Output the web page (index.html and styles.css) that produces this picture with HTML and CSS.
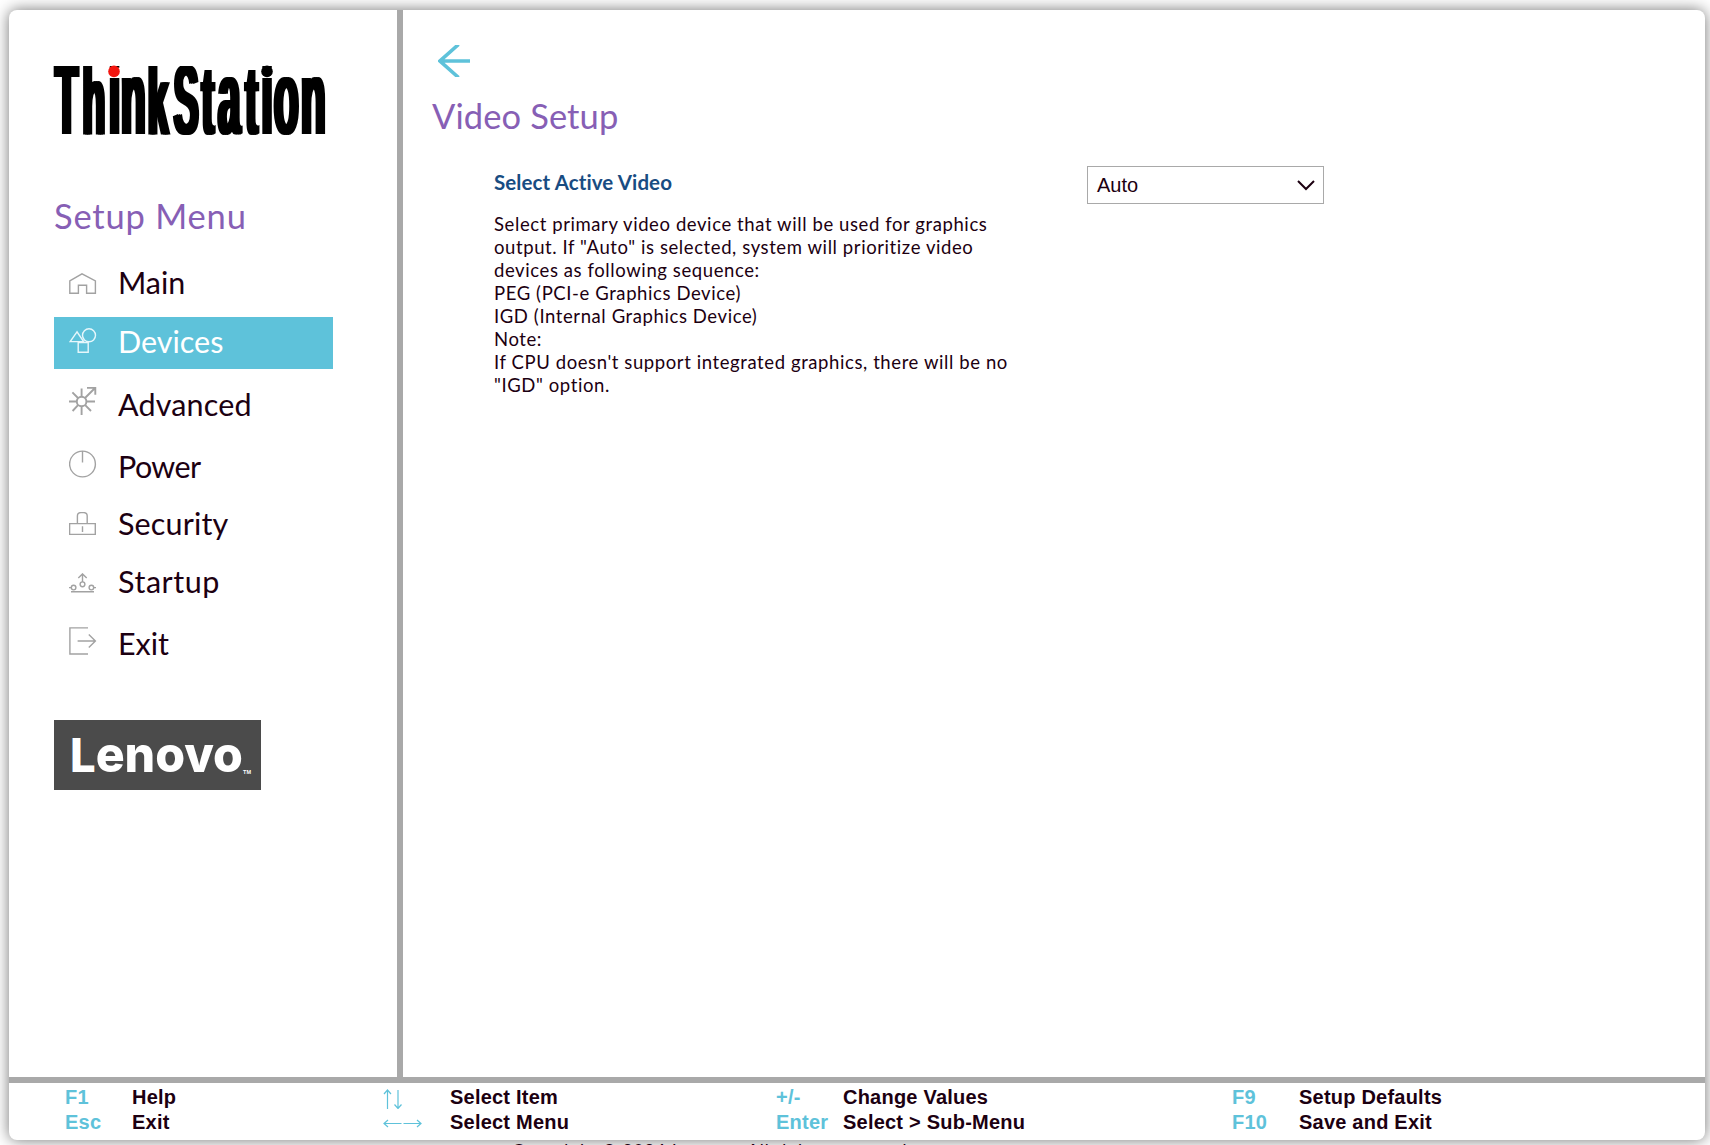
FILE: index.html
```html
<!DOCTYPE html>
<html lang="en">
<head>
<meta charset="utf-8">
<title>ThinkStation Setup</title>
<link rel="stylesheet" href="styles.css">
</head>
<body>
<div class="panel">
  <div class="workspace">
    <aside class="sidebar">
      <svg class="wordmark" width="272" height="69" viewBox="0 0 272 69">
        <filter id="widen" filterUnits="userSpaceOnUse" x="-5" y="-30" width="290" height="130">
          <feOffset in="SourceGraphic" dx="-2" dy="0" result="left"/>
          <feOffset in="SourceGraphic" dx="2" dy="0" result="right"/>
          <feMerge><feMergeNode in="left"/><feMergeNode in="SourceGraphic"/><feMergeNode in="right"/></feMerge>
        </filter>
        <g filter="url(#widen)"><g transform="scale(.38 1)">
          <text class="wordmark-text" y="68" x="3.6 75 144.7 176 247 315 389 431.5 504 545.8 579 650"><tspan>Th</tspan><tspan class="tall">in</tspan><tspan>kSt</tspan><tspan class="tall">a</tspan><tspan>t</tspan><tspan class="tall">ion</tspan></text>
        </g></g>
        <rect x="-4" y="-20" width="280" height="20" fill="#fff"/>
        <circle class="dot-red" cx="60" cy="5.4" r="5.8"/>
        <circle cx="213" cy="5.4" r="5.8"/>
      </svg>
      <h2 class="title menu-title">Setup Menu</h2>
      <nav class="menu">
        <a class="item gap-7"><svg width="28" height="21" viewBox="0 0 28 21"><path d="M.8 7.8 13 .8l13.4 7V20.2H17.6V12.3H9.4V20.2H.8Z"/></svg><span class="w-main">Main</span></a>
        <a class="item active gap-11"><svg width="28" height="25" viewBox="0 0 28 25"><path d="M8 3.8 1.2 13.6H14.6ZM9.2 14.6h10v9.6h-10Z"/><circle cx="20" cy="7.3" r="6.5"/></svg><span class="w-devices">Devices</span></a>
        <a class="item gap-10"><svg class="bold" width="28" height="30" viewBox="0 0 28 30"><circle cx="12.6" cy="15.5" r="4.8"/><path d="M12.6 2.5V10.500M12.6 20.500V29M0 15.500H7.6M17.6 15.500H26M3.4 6.4 9 12M3.6 25 9 19.200M16.2 19.200 22 25M16 12 26 2M18 1.9H26.3V8.8"/></svg><span class="w-advanced">Advanced</span></a>
        <a class="item gap-5"><svg width="28" height="28" viewBox="0 0 28 28"><circle cx="13.5" cy="14" r="12.9"/><path d="M13.5 1V12.5"/></svg><span class="w-power">Power</span></a>
        <a class="item gap-6"><svg width="28" height="23" viewBox="0 0 28 23"><path d="M.6 11.6H26.3V22.4H.6ZM8.4 11.4V4Q8.4.6 12 .6H14.6Q18.2.6 18.2 4V11.4M13.5 14.3V20"/></svg><span class="w-security">Security</span></a>
        <a class="item gap-10"><svg width="28" height="20" viewBox="0 0 28 20"><path d="M2 18.8H25M0 14.6H2.2M24.8 14.6H27M13.5 9V1M9.3 4.9 13.5.9 17.7 4.9"/><circle cx="4.6" cy="14.6" r="2.3"/><circle cx="13.5" cy="11.3" r="2.4"/><circle cx="22.4" cy="14.6" r="2.3"/></svg><span class="w-startup">Startup</span></a>
        <a class="item"><svg width="28" height="28" viewBox="0 0 28 28"><path d="M19 .9H.9V27H19M8.6 14H26M19.8 7.6 26.4 14 19.8 20.4"/></svg><span class="w-exit">Exit</span></a>
      </nav>
      <svg class="brand" width="207" height="70" viewBox="0 0 207 70">
        <rect width="207" height="70" fill="#4b4b4b"/>
        <text class="brand-text" x="16" y="51.5" textLength="173" lengthAdjust="spacingAndGlyphs">L<tspan class="brand-low">enovo</tspan></text>
        <text class="brand-tm" x="189" y="53.5" textLength="8" lengthAdjust="spacingAndGlyphs">TM</text>
      </svg>
    </aside>
    <main class="content">
      <svg class="back" width="33" height="32" viewBox="0 0 33 32"><path d="M20.5-.5 2 16 20.5 32.500M2 16H32"/></svg>
      <h1 class="title page-title">Video Setup</h1>
      <section class="setting">
        <div class="info">
          <h3 class="setting-name">Select Active Video</h3>
          <p class="help">Select primary video device that will be used for graphics<br>output. If "Auto" is selected, system will prioritize video<br>devices as following sequence:<br>PEG (PCI-e Graphics Device)<br>IGD (Internal Graphics Device)<br>Note:<br>If CPU doesn't support integrated graphics, there will be no<br>"IGD" option.</p>
        </div>
        <div class="select"><span>Auto</span><svg width="18" height="11" viewBox="0 0 18 11"><path d="M1 1 9 9 17 1"/></svg></div>
      </section>
    </main>
  </div>
  <footer class="keys">
    <dl class="group g1"><dt>F1</dt><dd>Help</dd><dt>Esc</dt><dd>Exit</dd></dl>
    <dl class="group g2"><dt><svg width="20" height="22" viewBox="0 0 20 22"><path d="M4.500 3V22M1 7 4.500 3 8 7M15 3V21M11.500 17.500 15 21.500 18.500 17.500"/></svg></dt><dd>Select Item</dd><dt><svg width="40" height="11" viewBox="0 0 40 11"><path d="M1 6.500H18.500M5 3 1 6.500 5 10M20.500 6.500H38M34 3 38 6.500 34 10"/></svg></dt><dd>Select Menu</dd></dl>
    <dl class="group g3"><dt>+/-</dt><dd>Change Values</dd><dt>Enter</dt><dd>Select &gt; Sub-Menu</dd></dl>
    <dl class="group"><dt>F9</dt><dd>Setup Defaults</dd><dt>F10</dt><dd>Save and Exit</dd></dl>
  </footer>
</div>
<p class="copyright">Copyright © 2024 Lenovo. All rights reserved.</p>
</body>
</html>
```

FILE: styles.css
```css
* { box-sizing: border-box; margin: 0; padding: 0; }
body {
  height: 1145px;
  overflow: hidden;
  padding: 10px 5px 0 9px;
  background: #fff;
  color: #1c0011;
  font-family: Lato, sans-serif;
}
svg { display: block; flex: none; }
.panel {
  display: flex;
  flex-direction: column;
  height: 1130px;
  border-radius: 8px;
  background: #fff;
  box-shadow: 0 0 15px rgba(0, 0, 0, .55);
}
.workspace { display: flex; height: 1067px; }
.sidebar { width: 394px; border-right: 6px solid #a9a9a9; padding: 56px 0 0 45px; }
.wordmark { overflow: visible; }
.wordmark-text { font: bold 98px "Liberation Sans", sans-serif; }
.tall { font-size: 106px; }
.dot-red { fill: #f3150f; }
.title { color: #875fb5; font-size: 34.500px; font-weight: 400; line-height: 42px; white-space: nowrap; }
.menu-title { margin-top: 60px; letter-spacing: .8px; }
.menu { margin-top: 21px; width: 279px; }
.item {
  display: flex;
  align-items: baseline;
  height: 52px;
  padding: 6px 0 10px 15px;
  font-size: 30.500px;
  line-height: 36px;
  white-space: nowrap;
}
.item svg { fill: none; stroke: #a2a2a2; stroke-width: 1.4; margin-right: 21px; }
.item .bold { stroke-width: 1.9; }
.active { background: #5ec2da; color: #fff; }
.item.active svg { stroke: #e6f7fb; }
.w-advanced { letter-spacing: .15px; }
.w-power { letter-spacing: -.6px; }
.w-security { letter-spacing: .15px; }
.w-startup { letter-spacing: .55px; }
.gap-5 { margin-bottom: 5px; }
.gap-6 { margin-bottom: 6px; }
.gap-7 { margin-bottom: 7px; }
.gap-10 { margin-bottom: 10px; }
.gap-11 { margin-bottom: 11px; }
.brand { margin-top: 49px; }
.brand-text { font: 800 47px Inter, sans-serif; fill: #fff; }
.brand-low { font-size: 50px; }
.brand-tm { font: bold 6px "Liberation Sans", sans-serif; fill: #fff; }
.content { flex: 1; padding: 35px 0 0 29px; }
.back { margin-left: 6px; fill: none; stroke: #5ec2da; stroke-width: 3.6; }
.page-title { margin-top: 18px; letter-spacing: .1px; }
.setting { display: flex; padding-left: 62px; margin-top: 29px; }
.info { width: 593px; }
.setting-name { font-size: 20.500px; line-height: 26px; color: #184c82; white-space: nowrap; margin-top: 3px; letter-spacing: .1px; }
.help { font-size: 18.500px; line-height: 23px; white-space: nowrap; margin-top: 18px; letter-spacing: .59px; }
.select {
  display: flex;
  align-items: center;
  justify-content: space-between;
  width: 237px;
  height: 38px;
  border: 1px solid #a9a9a9;
  padding: 0 8px 0 9px;
  font: 20px "Liberation Sans", sans-serif;
}
.select svg { fill: none; stroke: #1c0011; stroke-width: 2; }
.keys { display: flex; height: 63px; border-top: 6px solid #a9a9a9; padding: 2px 0 0 56px; }
.group {
  display: grid;
  grid-template-columns: 67px auto;
  grid-template-rows: 25px 25px;
  align-content: start;
  justify-content: start;
  font: bold 20px/25px "Liberation Sans", sans-serif;
  letter-spacing: .22px;
  white-space: nowrap;
}
.g1 { width: 318px; }
.g2 { width: 393px; }
.g3 { width: 456px; }
.group dt { display: flex; align-items: center; color: #5ec2da; }
.group svg { fill: none; stroke: #5ec2da; stroke-width: 1.2; }
.copyright { padding-left: 503px; margin-top: 1px; font: 18px/20px "Liberation Sans", sans-serif; letter-spacing: .86px; white-space: nowrap; }
```
